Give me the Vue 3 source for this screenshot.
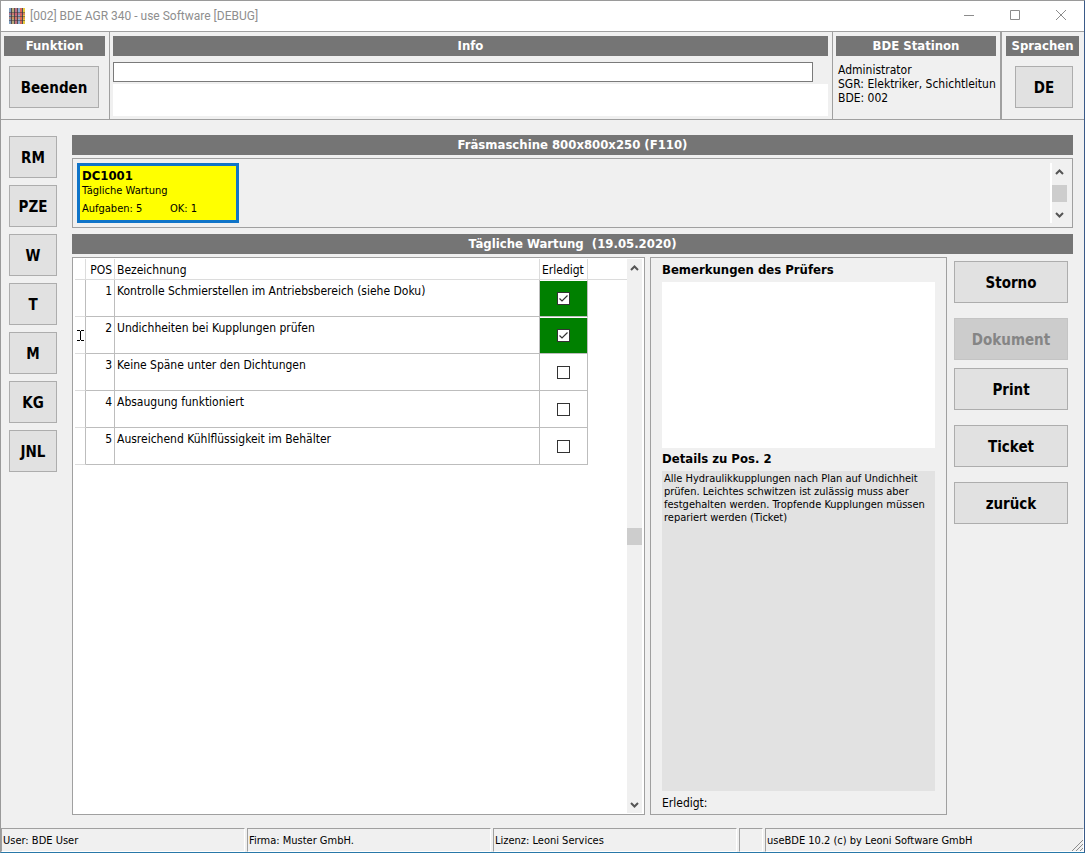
<script setup>
import { reactive, ref } from 'vue'

const modules = ['RM', 'PZE', 'W', 'T', 'M', 'KG', 'JNL']

const tasks = reactive([
  { pos: 1, name: 'Kontrolle Schmierstellen im Antriebsbereich (siehe Doku)', done: true },
  { pos: 2, name: 'Undichheiten bei Kupplungen prüfen', done: true },
  { pos: 3, name: 'Keine Späne unter den Dichtungen', done: false },
  { pos: 4, name: 'Absaugung funktioniert', done: false },
  { pos: 5, name: 'Ausreichend Kühlflüssigkeit im Behälter', done: false },
])

const activePos = ref(2)
const remarks = ref('')
const info = ref('')
</script>

<template>
  <div class="window">
    <header class="titlebar">
      <svg class="logo" width="16" height="16" viewBox="0 0 16 16" aria-hidden="true">
        <rect width="16" height="16" fill="#a09488" />
        <rect x="0" width="2" height="16" fill="#7f9fc0" />
        <rect x="3" width="2" height="16" fill="#b8a878" />
        <rect x="6" width="2" height="16" fill="#c07080" />
        <rect x="9" width="2" height="16" fill="#8caad0" />
        <rect x="11" width="2" height="16" fill="#d86858" />
        <rect x="14" width="2" height="16" fill="#e8cc40" />
        <rect y="5" width="16" height="2" fill="#d05868" fill-opacity=".6" />
        <rect y="9" width="16" height="2" fill="#e07848" fill-opacity=".5" />
        <path d="M2.500 0v16M5.500 0v16M8.500 0v16M13.500 0v16" stroke="#2c3040" stroke-opacity=".7" fill="none" />
        <path d="M0 4.500h16M0 8.500h16M0 12.500h16" stroke="#3c3038" stroke-opacity=".5" fill="none" />
      </svg>
      <h1>[002] BDE AGR 340 - use Software [DEBUG]</h1>
      <div class="controls">
        <button type="button" aria-label="Minimieren">
          <svg width="12" height="12" viewBox="0 0 12 12"><path d="M1 5.500h10" /></svg>
        </button>
        <button type="button" aria-label="Maximieren">
          <svg width="12" height="12" viewBox="0 0 12 12"><path d="M1.500 .5h9v9h-9z" /></svg>
        </button>
        <button type="button" aria-label="Schließen">
          <svg width="12" height="12" viewBox="0 0 12 12"><path d="M1 0l10 10M11 0L1 10" /></svg>
        </button>
      </div>
    </header>

    <section class="top">
      <div class="group function">
        <h2 class="bar">Funktion</h2>
        <button type="button" class="btn">Beenden</button>
      </div>
      <div class="group info">
        <h2 class="bar">Info</h2>
        <input v-model="info" type="text" aria-label="Info" />
        <div class="message"></div>
      </div>
      <div class="group station">
        <h2 class="bar">BDE Statinon</h2>
        <p>Administrator<br />SGR: Elektriker, Schichtleitun<br />BDE: 002</p>
      </div>
      <div class="group language">
        <h2 class="bar">Sprachen</h2>
        <button type="button" class="btn">DE</button>
      </div>
    </section>

    <div class="body">
      <nav class="modules">
        <button v-for="m in modules" :key="m" type="button" class="btn">{{ m }}</button>
      </nav>

      <main class="main">
        <h2 class="bar">Fräsmaschine 800x800x250 (F110)</h2>
        <section class="orders">
          <button type="button" class="card">
            <strong>DC1001</strong>
            <span>Tägliche Wartung</span>
            <span class="counts"><span>Aufgaben: 5</span><span>OK: 1</span></span>
          </button>
          <div class="scroll small">
            <svg width="9" height="6" viewBox="0 0 9 6"><path d="M1 5l3.500-3.500L8 5" /></svg>
            <i class="thumb"></i>
            <svg width="9" height="6" viewBox="0 0 9 6"><path d="M1 1l3.500 3.500L8 1" /></svg>
          </div>
        </section>
        <h2 class="bar">Tägliche Wartung&nbsp; (19.05.2020)</h2>

        <div class="work">
          <section class="list">
            <div class="grid">
              <table>
                <thead>
                  <tr>
                    <th class="mark"></th>
                    <th class="pos">POS</th>
                    <th class="name">Bezeichnung</th>
                    <th class="done">Erledigt</th>
                    <th class="rest"></th>
                  </tr>
                </thead>
                <tbody>
                  <tr v-for="t in tasks" :key="t.pos" @click="activePos = t.pos">
                    <td class="mark">
                      <svg v-if="t.pos === activePos" width="7" height="11" viewBox="0 0 7 11">
                        <path d="M0 .5h3M4 .5h3M0 10.500h3M4 10.500h3M3.500 1v9" stroke="#000" fill="none" />
                      </svg>
                    </td>
                    <td class="pos">{{ t.pos }}</td>
                    <td class="name">{{ t.name }}</td>
                    <td class="done" :class="{ ok: t.done }">
                      <label class="check">
                        <input v-model="t.done" type="checkbox" :aria-label="'Erledigt: ' + t.name" />
                        <svg v-if="t.done" width="13" height="13" viewBox="0 0 13 13">
                          <path d="M2.500 6.500L5 9l5.500-5.500" />
                        </svg>
                      </label>
                    </td>
                    <td class="rest"></td>
                  </tr>
                </tbody>
              </table>
            </div>
            <div class="scroll">
              <svg width="9" height="6" viewBox="0 0 9 6"><path d="M1 5l3.500-3.500L8 5" /></svg>
              <i class="thumb"></i>
              <svg width="9" height="6" viewBox="0 0 9 6"><path d="M1 1l3.500 3.500L8 1" /></svg>
            </div>
          </section>

          <section class="details">
            <label for="remarks">Bemerkungen des Prüfers</label>
            <textarea id="remarks" v-model="remarks"></textarea>
            <h3>Details zu Pos. 2</h3>
            <p class="text">Alle Hydraulikkupplungen nach Plan auf Undichheit prüfen. Leichtes schwitzen ist zulässig muss aber festgehalten werden. Tropfende Kupplungen müssen repariert werden (Ticket)</p>
            <p class="state">Erledigt:</p>
          </section>

          <aside class="actions">
            <button type="button" class="btn">Storno</button>
            <div class="pair">
              <button type="button" class="btn" disabled>Dokument</button>
              <button type="button" class="btn">Print</button>
            </div>
            <button type="button" class="btn">Ticket</button>
            <button type="button" class="btn">zurück</button>
          </aside>
        </div>
      </main>
    </div>

    <footer class="status">
      <span>User: BDE User</span>
      <span>Firma: Muster GmbH.</span>
      <span>Lizenz: Leoni Services</span>
      <span></span>
      <span class="last">useBDE 10.2 (c) by Leoni Software GmbH
        <svg width="12" height="12" viewBox="0 0 12 12"><path d="M1 12L12 1M5 12l7-7M9 12l3-3" stroke="#8c8c8c" fill="none" /></svg>
      </span>
    </footer>
  </div>
</template>

<style>
body {
  margin: 0;
}
</style>

<style scoped>
.window {
  box-sizing: border-box;
  min-height: 100vh;
  display: flex;
  flex-direction: column;
  background: #f0f0f0;
  border: 1px solid #9a9a9a;
  border-right-color: #3a5a88;
  border-bottom-color: #2878a8;
  color: #000;
  font-family: "DejaVu Sans Condensed", "DejaVu Sans", sans-serif;
  font-size: 12px;
  line-height: 14px;
}
.window *,
.window *::before {
  box-sizing: border-box;
}
h1, h2, h3, p {
  margin: 0;
}
button {
  font: inherit;
  color: inherit;
}

.titlebar {
  height: 30px;
  display: flex;
  align-items: center;
  padding-left: 8px;
  background: #fff;
}
.titlebar h1 {
  flex: 1;
  margin-left: 5px;
  font-family: Roboto, "Noto Sans", sans-serif;
  font-weight: 400;
  font-size: 12px;
  color: #8e8e8e;
}
.controls {
  display: flex;
}
.controls button {
  width: 46px;
  height: 28px;
  display: flex;
  align-items: center;
  justify-content: center;
  padding: 0;
  border: 0;
  background: none;
}
.controls svg path {
  fill: none;
  stroke: #8c8c8c;
}

.top {
  display: grid;
  grid-template-columns: 109px 1fr 169px 82px;
  height: 89px;
  border: solid #a0a0a0;
  border-width: 1px 0;
}
.group {
  padding: 4px 4px 3px 3px;
  border-right: 1px solid #a0a0a0;
}
.group.station {
  border-right-width: 2px;
}
.group.language {
  border-right: 0;
  padding: 4px 5px 3px 4px;
}
.bar {
  height: 20px;
  background: #757575;
  color: #fff;
  font-size: 13px;
  line-height: 20px;
  font-weight: 700;
  text-align: center;
  white-space: nowrap;
}
.btn {
  height: 42px;
  padding: 2px 0 0;
  background: #e1e1e1;
  border: 1px solid #adadad;
  font-weight: 700;
  font-size: 15px;
}
.btn:disabled {
  background: #ccc;
  border-color: #c4c4c4;
  color: #858585;
}
.function .btn {
  width: 90px;
  margin: 10px 5px 0;
}
.language .btn {
  width: 58px;
  margin: 10px 9px 0;
}
.info {
  display: flex;
  flex-direction: column;
}
.info input {
  height: 20px;
  margin: 6px 15px 2px 0;
  border: 1px solid #7a7a7a;
  background: #fff;
  font: inherit;
}
.message {
  flex: 1;
  background: #fff;
}
.station p {
  padding: 7px 0 0 2px;
  white-space: nowrap;
  overflow: hidden;
}

.body {
  flex: 1;
  display: flex;
  gap: 15px;
  padding: 15px 11px 13px 8px;
}
.modules {
  width: 48px;
  display: flex;
  flex-direction: column;
  gap: 7px;
  padding-top: 1px;
}
.main {
  flex: 1;
  min-width: 0;
  display: flex;
  flex-direction: column;
}
.orders {
  height: 70px;
  display: flex;
  justify-content: space-between;
  margin: 3px 0 6px;
  padding: 4px 5px 4px 4px;
  border: 1px solid #a0a0a0;
}
.card {
  width: 162px;
  height: 60px;
  display: flex;
  flex-direction: column;
  padding: 2px;
  border: 3px solid #0f74c8;
  background: #ff0;
  text-align: left;
  font-size: 11px;
}
.card strong {
  font-size: 13px;
  line-height: 16px;
}
.counts {
  display: grid;
  grid-template-columns: 88px 1fr;
  margin-top: 4px;
}
.scroll {
  width: 15px;
  display: flex;
  flex-direction: column;
  align-items: center;
  justify-content: space-between;
  padding: 6px 0 5px;
  margin: 1px 2px 1px 0;
  background: #f0f0f0;
}
.scroll.small {
  width: 17px;
  margin: 0;
  border-left: 2px solid #fff;
}
.scroll path {
  fill: none;
  stroke: #555;
  stroke-width: 2;
}
.thumb {
  width: 15px;
  height: 17px;
  background: #cdcdcd;
}

.work {
  flex: 1;
  display: grid;
  grid-template-columns: 1fr 297px 116px;
  column-gap: 5px;
  margin: 3px 5px 0 0;
}
.list {
  display: flex;
  border: 1px solid #a0a0a0;
  background: #fff;
}
.grid {
  flex: 1;
  padding: 1px 0 0 2px;
}
.grid table {
  width: 100%;
  table-layout: fixed;
  border-collapse: separate;
  border-spacing: 0;
}
.grid th {
  height: 21px;
  padding: 2px 2px 0;
  border: solid #dcdcdc;
  border-width: 0 1px 1px 0;
  font-weight: 400;
  text-align: left;
  white-space: nowrap;
}
.grid td {
  height: 37px;
  padding: 4px 2px 0;
  border: solid #bdbdbd;
  border-width: 0 1px 1px 0;
  vertical-align: top;
}
.grid .mark {
  width: 11px;
  padding: 0;
  vertical-align: middle;
  border-bottom-color: #dcdcdc;
}
.mark svg {
  display: block;
  margin-left: 2px;
}
.grid .pos {
  width: 29px;
  text-align: right;
}
.grid .name {
  width: 425px;
}
.grid .done {
  width: 48px;
}
.grid td.done {
  padding: 0;
  vertical-align: middle;
}
.grid td.ok {
  background: #008000;
  background-clip: padding-box;
  border-top: 1px solid #fff;
}
.grid .rest {
  border-right: 0;
}
.grid td.rest {
  border: 0;
}
.check {
  position: relative;
  display: block;
  width: 13px;
  height: 13px;
  margin: 0 auto;
}
.check input {
  appearance: none;
  display: block;
  width: 13px;
  height: 13px;
  margin: 0;
  border: 1px solid #333;
  background: #fff;
}
.check svg {
  position: absolute;
  inset: 0;
  pointer-events: none;
}
.check path {
  fill: none;
  stroke: #333;
  stroke-width: 1.2;
}

.details {
  display: flex;
  flex-direction: column;
  padding: 4px 11px;
  border: 1px solid #a0a0a0;
}
.details label,
.details h3 {
  font-size: 13px;
  line-height: 16px;
  font-weight: 700;
}
.details textarea {
  height: 166px;
  margin: 4px 0 3px;
  border: 0;
  background: #fff;
  resize: none;
  font: inherit;
}
.details .text {
  flex: 1;
  margin-top: 4px;
  padding: 1px 2px;
  background: #e2e2e2;
  font-size: 11px;
  line-height: 13px;
}
.details .state {
  padding: 5px 0 0;
}
.actions {
  display: flex;
  flex-direction: column;
  gap: 15px;
  margin-left: 2px;
  padding-top: 4px;
}
.pair {
  display: grid;
  gap: 8px;
}

.status {
  height: 24px;
  display: grid;
  grid-template-columns: 244px 244px 244px 24px 1fr;
  gap: 2px;
  font-size: 11px;
}
.status span {
  padding: 5px 1px 0;
  border: 1px solid;
  border-color: #a0a0a0 #fff #fff #a0a0a0;
  white-space: nowrap;
}
.status .last {
  display: flex;
  justify-content: space-between;
  padding-right: 0;
}
.last svg {
  align-self: flex-end;
}
</style>
